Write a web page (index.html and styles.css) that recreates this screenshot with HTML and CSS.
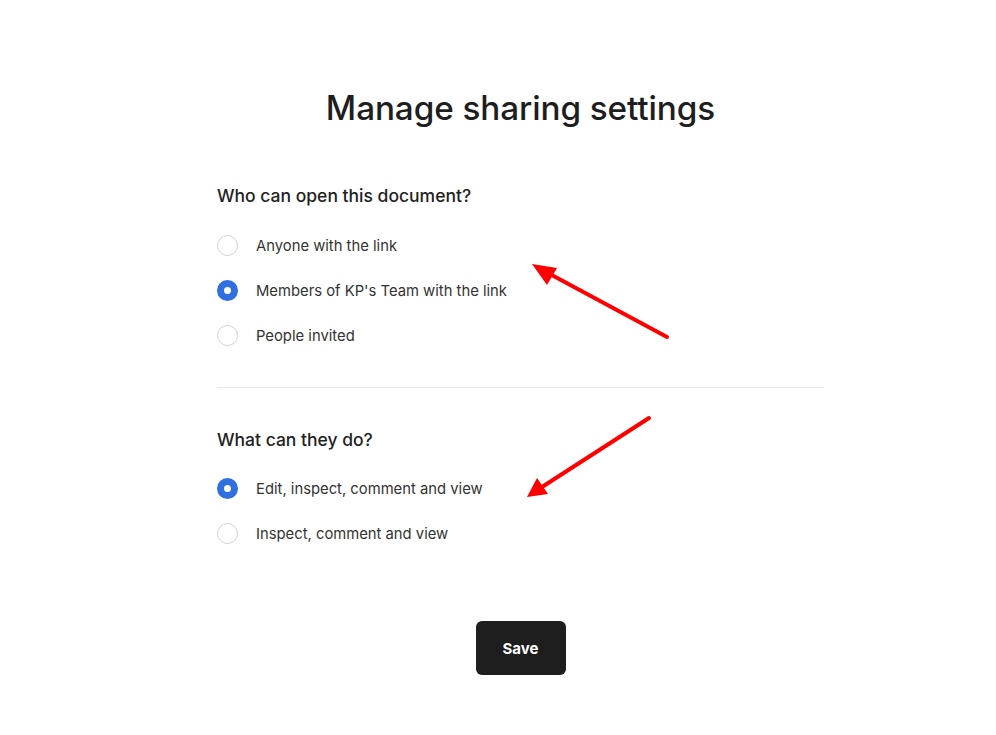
FILE: index.html
```html
<!DOCTYPE html>
<html>
<head>
<meta charset="utf-8">
<link rel="stylesheet" href="styles.css">
</head>
<body>
<div class="page">
  <h1 class="title">Manage sharing settings</h1>
  <section class="group">
    <h2 class="heading">Who can open this document?</h2>
    <div class="options">
      <label class="option"><span class="radio"></span><span class="label">Anyone with the link</span></label>
      <label class="option"><span class="radio checked"></span><span class="label">Members of KP's Team with the link</span></label>
      <label class="option"><span class="radio"></span><span class="label">People invited</span></label>
    </div>
  </section>
  <hr class="divider">
  <section class="group second">
    <h2 class="heading">What can they do?</h2>
    <div class="options">
      <label class="option"><span class="radio checked"></span><span class="label">Edit, inspect, comment and view</span></label>
      <label class="option"><span class="radio"></span><span class="label">Inspect, comment and view</span></label>
    </div>
  </section>
  <div class="actions"><button class="save">Save</button></div>
</div>
<svg class="arrows" width="996" height="735" viewBox="0 0 996 735">
  <line x1="667" y1="337" x2="548" y2="273" stroke="#ff0000" stroke-width="4" stroke-linecap="round"/>
  <polygon points="532,264 557,268 547,285" fill="#ff0000"/>
  <line x1="649" y1="418" x2="542" y2="487" stroke="#ff0000" stroke-width="4" stroke-linecap="round"/>
  <polygon points="527,497 537,478 548,494" fill="#ff0000"/>
</svg>
</body>
</html>
```
FILE: styles.css
```css
html, body {
  margin: 0;
  padding: 0;
  background: #ffffff;
}
body {
  font-family: Inter, "Noto Sans", sans-serif;
  color: #222222;
  position: relative;
  width: 996px;
  height: 735px;
  overflow: hidden;
}
.page {
  width: 607px;
  margin-left: 217px;
  padding-top: 88px;
}
.title {
  margin: 0;
  text-align: center;
  font-size: 33.3px;
  font-weight: 500;
  line-height: 40px;
  color: #1e1e1e;
  letter-spacing: -0.1px;
}
.heading {
  margin: 57px 0 0;
  font-size: 17.5px;
  font-weight: 500;
  line-height: 22px;
  color: #222222;
}
.second .heading {
  margin-top: 41px;
}
.options {
  display: flex;
  flex-direction: column;
  gap: 24px;
  margin-top: 28px;
}
.second .options {
  margin-top: 27px;
}
.option {
  display: flex;
  align-items: center;
  height: 21px;
}
.radio {
  width: 21px;
  height: 21px;
  border: 1px solid #d2d2d2;
  border-radius: 50%;
  box-sizing: border-box;
  flex: none;
  margin-right: 18px;
  background: #fff;
}
.radio.checked {
  border: 7px solid #2f6fe0;
}
.label {
  font-size: 14.8px;
  color: #333333;
  line-height: 20px;
}
.divider {
  border: 0;
  border-top: 1px solid #e8e8e8;
  margin: 41px 0 0;
}
.actions {
  display: flex;
  justify-content: center;
  margin-top: 77px;
}
.save {
  width: 90px;
  height: 54px;
  border: 0;
  border-radius: 6px;
  background: #1e1e1e;
  color: #ffffff;
  font-family: Inter, "Noto Sans", sans-serif;
  font-size: 15px;
  font-weight: 700;
}
.arrows {
  position: absolute;
  left: 0;
  top: 0;
  pointer-events: none;
}
```
